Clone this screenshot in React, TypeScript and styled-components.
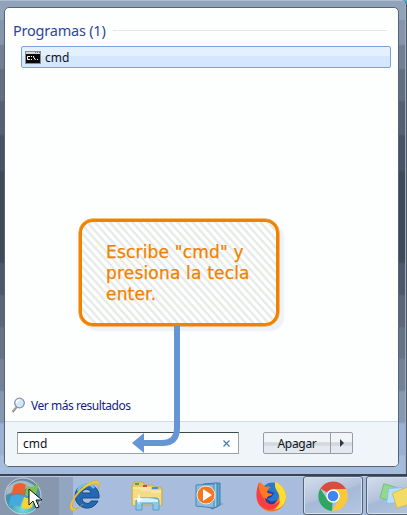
import React from 'react';
import styled, { createGlobalStyle } from 'styled-components';

const Global = createGlobalStyle`
  * { box-sizing: border-box; }
  body { margin: 0; overflow: hidden; font-family: "Noto Sans", "Open Sans", sans-serif; font-size: 12px; color: #10141c; }
`;

const Screen = styled.main`
  position: relative;
  width: 407px;
  height: 515px;
  display: flex;
  flex-direction: column;
  overflow: hidden;
  background: #35bccb;
`;

const Frame = styled.section`
  height: 474px;
  padding: 7px 8px 7px 4px;
  border-right: 1px solid #4b5666;
  border-radius: 0 5px 0 0;
  box-shadow: inset 0 1px #aebdd0, inset -1px 0 #9dadc2;
  background: linear-gradient(#91a2bb 0 20px, #8495ad 20px 44px, #728095 46px 68px, #626f81 70px 100px,
    #556173 102px 134px, #485464 136px 170px, #3f4a59 172px 262px, #4d596a 264px 294px,
    #5b6779 296px 326px, #667387 328px 358px, #748298 360px 390px, #8798b1 392px 422px, #9ab1d3 424px 455px, #a5bcdd 456px);
`;

const Panel = styled.div`
  height: 460px;
  width: 395px;
  display: flex;
  flex-direction: column;
  border: 1px solid #566477;
  border-radius: 5px;
  overflow: hidden;
  background: #fdfffe;
`;

const Results = styled.div`
  flex: 1;
  display: flex;
  flex-direction: column;
  padding: 12px 7px 6px 8px;
`;

const Heading = styled.h1`
  margin: 0;
  height: 20px;
  display: flex;
  align-items: center;
  gap: 7px;
  padding-right: 4px;
  font-size: 14.5px;
  font-weight: 400;
  letter-spacing: -0.22px;
  color: #2f4699;
  white-space: nowrap;
  &::after { content: ""; flex: 1; height: 1px; background: #e3e6ea; }
`;

const ResultItem = styled.div`
  margin: 6px 0 0 8px;
  height: 22px;
  display: flex;
  align-items: center;
  gap: 4px;
  padding-left: 3px;
  border: 1px solid #7da2d6;
  border-radius: 2px;
  background: linear-gradient(#e5f0fe 0 45%, #d4e7fe 45%);
`;

const MoreResults = styled.div`
  margin-top: auto;
  height: 20px;
  display: flex;
  align-items: center;
  gap: 5px;
  margin-left: -2px;
  color: #151c82;
  letter-spacing: -0.46px;
`;

const Footer = styled.div`
  height: 45px;
  display: flex;
  align-items: flex-start;
  padding: 10px 0 0 12px;
  gap: 24px;
  background: #f0f5fa;
  border-top: 1px solid #ccdaea;
`;

const SearchBox = styled.div`
  width: 222px;
  height: 22px;
  display: flex;
  align-items: center;
  justify-content: space-between;
  padding: 0 8px 0 5px;
  background: #fdfffe;
  border: 1px solid #9da2a5;
  border-top-color: #3c4944;
`;

const SplitButton = styled.div`
  width: 90px;
  height: 22px;
  display: flex;
  border: 1px solid #989da5;
  border-radius: 2px;
  background: linear-gradient(#f1f5f8 0 45%, #d2d8df 48% 62%, #e4e9ee 64%);
`;

const ButtonPart = styled.div<{ $main?: boolean }>`
  flex: ${p => (p.$main ? '0 0 67px' : '1')};
  display: flex;
  align-items: center;
  justify-content: center;
  letter-spacing: -0.3px;
  border-right: ${p => (p.$main ? '1px solid #989da5' : '0')};
`;

const Taskbar = styled.nav`
  height: 41px;
  display: flex;
  border-top: 2px solid #3b4352;
  background: linear-gradient(90deg, #8797ae 0 59px, #93a6c1 59px 73px, #a8bddd 73px);
  box-shadow: inset 0 1px #bccbe0;
`;

const TaskSlot = styled.div<{ $w: number; $open?: boolean }>`
  flex: 0 0 ${p => p.$w}px;
  height: 39px;
  display: flex;
  align-items: center;
  justify-content: center;
  border: ${p => (p.$open ? '1px solid #566276' : '0')};
  border-radius: 3px;
  box-shadow: ${p => (p.$open ? 'inset 0 0 0 1px #d5e0ed' : 'none')};
  background: ${p => (p.$open ? 'linear-gradient(160deg, #d4deea, #b3c3dc 45%, #a5b9d8 50%, #b5c7e1)' : 'transparent')};
  margin-right: ${p => (p.$open ? '3px' : '0')};
  overflow: hidden;
  svg { display: block; flex: none; }
`;

const Callout = styled.aside`
  position: absolute;
  left: 79px;
  top: 219px;
  width: 200px;
  height: 107px;
  padding: 20px 20px 0 24px;
  border: 3px solid #f08200;
  border-radius: 14px;
  background: repeating-linear-gradient(48deg, #fdfffe 0 2.6px, #e9ebe9 3.2px 5px, #fdfffe 5.6px);
  box-shadow: 0 0 0 0.5px #f08200, 5px 5px 2px #edf2f8;
  color: #f08200;
  font: 17px/21px "DejaVu Sans", sans-serif;
  letter-spacing: 0.18px;
  -webkit-text-stroke: 0.25px #f08200;
  white-space: nowrap;
`;

const Overlay = styled.svg<{ $x: number; $y: number }>`
  position: absolute;
  left: ${p => p.$x}px;
  top: ${p => p.$y}px;
`;

const ConsoleIcon = () => (
  <svg width="16" height="13" viewBox="0 0 16 13">
    <path fill="#8d8987" d="M0 0h16v13H0z" />
    <path fill="#d5d7d8" d="M1 1h14v2H1z" />
    <path fill="#090b0a" d="M1 3h14v9H1z" />
    <path fill="#666" d="M10 1h1v1h-1zM12 1h1v1h-1zM14 1h1v1h-1z" />
    <path stroke="#fff" fill="none" d="M5 5.5H2.5v3H5M6.5 5v1M6.5 8v1M8.5 5v1l2 3M12 8.5h1" />
  </svg>
);

const SearchIcon = () => (
  <svg width="15" height="17" viewBox="0 0 15 17">
    <path d="m5.5 10-4 5" stroke="#8c8983" strokeWidth="2.2" />
    <path d="m5 10-4 5" stroke="#d5c8ba" strokeWidth=".8" />
    <circle cx="8.5" cy="6" r="4.8" fill="#cfe8fa" stroke="#8694a8" strokeWidth="1.3" />
    <path d="M5.5 6a3 3 0 0 1 3-3" fill="none" stroke="#fff" strokeWidth="1.5" />
  </svg>
);

const StartIcon = () => (
  <svg width="42" height="38" viewBox="0 0 42 38">
    <defs>
      <radialGradient id="orb" cx=".5" cy=".85" r=".85">
        <stop offset="0" stopColor="#75e0de" /><stop offset=".5" stopColor="#3e91b0" /><stop offset="1" stopColor="#70869e" />
      </radialGradient>
    </defs>
    <circle cx="20" cy="19" r="18" fill="url(#orb)" stroke="#c0d5de" />
    <path d="M4 11Q18-4 34 11 19 10 3 18z" fill="#c6cfd3" opacity=".7" />
    <path d="M11 8q6-4 12 0l-2 10q-6-3-13 0z" fill="#ee6030" />
    <path d="M24 9q6 3 12-3l-3 11q-6 4-11 1z" fill="#79c44d" />
    <path d="M8 19q6-3 12 0l-3 11q-6-4-12 0z" fill="#45a8df" />
    <path d="M21 20q6 3 11-1l-3 11q-6 4-11 0z" fill="#f4d536" />
  </svg>
);

const IeIcon = () => (
  <svg width="34" height="34" viewBox="0 0 34 34">
    <path d="M29 22A12 12 0 1 1 30 16v3H13c0 6 8 7 9 3zM13 14h9c-1-5-8-5-9 0z" fill="#2469b5" stroke="#174a87" />
    <path d="M9 12a9 9 0 0 1 16-3" stroke="#6ec5ee" strokeWidth="2.5" fill="none" />
    <path d="M29 10C31 2 24 4 16 9 7 15 1 26 4 29c2 2 6 0 10-4-5 5-10 8-12 6C-2 27 6 14 15 7 25 0 34-1 29 10z" fill="#f5c937" stroke="#d9a62a" strokeWidth=".5" />
  </svg>
);

const FolderIcon = () => (
  <svg width="34" height="32" viewBox="0 0 34 32">
    <path d="M2 6 4 2h9l2 3h8l2 2h6l1 2v16H2z" fill="#e6c966" stroke="#c9aa51" />
    <path d="M3 7h18v3h10v15H3z" fill="#f7e8a0" />
    <path d="M3 9h8v2h10v2h10v12H3z" fill="#f5dc82" />
    <path d="M5 3h4v2H5z" fill="#42ae42" /><path d="M13 5h4v2h-4z" fill="#d84436" /><path d="M22 7h6v2h-6z" fill="#3f92d3" />
    <path d="M6 30V21q0-3 3-3h17q3 0 3 3v9h-6v-6H12v6z" fill="#8bc8e4" stroke="#559fc9" />
    <path d="M7 20q9-4 21 0v2H7z" fill="#d7f2fb" />
    <path d="m9 13 1 5 5 1-5 1-1 5-1-5-5-1 5-1z" fill="#fff" />
  </svg>
);

const MediaIcon = () => (
  <svg width="30" height="28" viewBox="0 0 30 28">
    <path d="m18 27 11-5-4-2-6 5z" fill="#7d97b6" opacity=".6" />
    <path d="M10 2 25 1v22l-8 4z" fill="#5fa4cf" stroke="#367eac" />
    <path d="M8 2 22 1v24l-7 1z" fill="#9dcae5" stroke="#367eac" />
    <path d="m1 3 18-1v24L1 24z" fill="#8cbad8" stroke="#4587b3" />
    <circle cx="11" cy="13" r="9" fill="#f47820" stroke="#e6e9e9" />
    <path d="m8 7 9 6-9 6z" fill="#fff" />
  </svg>
);

const FirefoxIcon = () => (
  <svg width="31" height="32" viewBox="0 0 32 32">
    <circle cx="17" cy="14" r="12" fill="#2779cf" />
    <path d="M3 2c3 0 5 3 6 5 2-1 5-1 6 0-3 1-5 4-3 6h4c-1 3-5 2-5 5 2 7 12 5 13-2C25 11 19 9 20 1c5 3 11 8 11 16A15 15 0 0 1 1 17C1 10 2 8 3 2z" fill="#fb7123" />
    <path d="M20 1c7 4 11 9 11 16 0 7-5 12-12 13 7-5 5-11 5-14-1-6-6-7-4-15z" fill="#ffdc34" />
    <path d="M3 2c0 6 2 15 8 20 5 5 12 2 14-1-2 8-10 11-16 8-9-4-11-14-6-27z" fill="#f8324b" opacity=".8" />
    <path d="m11 10 8 3-3 4-5 2 5 3 6-2-3 4c-5 2-10-2-10-7z" fill="#273c9f" />
    <path d="M3 2c4 2 6 6 12 5-3 2-4 4-3 6l5 1c-2 3-5 1-6 5-5-2-9-9-8-17z" fill="#ff7920" />
  </svg>
);

const ChromeIcon = () => (
  <svg width="30" height="30" viewBox="0 0 30 30">
    <path d="M15 15 2.3 7.5A15 15 0 0 1 28 8H15z" fill="#db4b3e" />
    <path d="M15 15 14 30A15 15 0 0 1 2.3 7.5L9 18z" fill="#2fa660" />
    <path d="M15 15V8h13a15 15 0 0 1-14 22l7-12z" fill="#f9c83b" />
    <circle cx="15" cy="15" r="6.7" fill="#fff" />
    <circle cx="15" cy="15" r="5.3" fill="#3f85ef" />
  </svg>
);

const NotesIcon = () => (
  <svg width="34" height="30" viewBox="0 0 36 32">
    <path d="m5 3 14 4-4 15L1 18z" fill="#93d98c" stroke="#74bd79" />
    <path d="m10 8 15-1 2 16-19 1z" fill="#b6dfff" stroke="#89bee9" />
    <path d="m14 13 20-8 6 17-21 7z" fill="#f2dc68" stroke="#d8b949" />
  </svg>
);

const FooterBar = () => (
  <Footer>
    <SearchBox>
      <span>cmd</span>
      <svg width="7" height="7" viewBox="0 0 7 7"><path d="m.5.5 6 6m0-6-6 6" stroke="#4d7eac" strokeWidth="1.3" /></svg>
    </SearchBox>
    <SplitButton>
      <ButtonPart $main>Apagar</ButtonPart>
      <ButtonPart><svg width="4" height="8" viewBox="0 0 4 8"><path d="m0 0 4 4-4 4z" fill="#303844" /></svg></ButtonPart>
    </SplitButton>
  </Footer>
);

export default function App() {
  return (
    <>
      <Global />
      <Screen>
        <Frame>
          <Panel>
            <Results>
              <Heading>Programas (1)</Heading>
              <ResultItem><ConsoleIcon /><span>cmd</span></ResultItem>
              <MoreResults><SearchIcon /><span>Ver más resultados</span></MoreResults>
            </Results>
            <FooterBar />
          </Panel>
        </Frame>
        <Taskbar>
          <TaskSlot $w={48}><StartIcon /></TaskSlot>
          <TaskSlot $w={75}><IeIcon /></TaskSlot>
          <TaskSlot $w={48}><FolderIcon /></TaskSlot>
          <TaskSlot $w={78}><MediaIcon /></TaskSlot>
          <TaskSlot $w={45}><FirefoxIcon /></TaskSlot>
          <TaskSlot $w={9} />
          <TaskSlot $w={60} $open><ChromeIcon /></TaskSlot>
          <TaskSlot $w={60} $open><NotesIcon /></TaskSlot>
        </Taskbar>
        <Callout>Escribe "cmd" y<br />presiona la tecla<br />enter.</Callout>
        <Overlay $x={130} $y={326} width="54" height="132" viewBox="0 0 54 132">
          <path d="M47 0v102q0 15-15 15H13" fill="none" stroke="#6595d5" strokeWidth="6" />
          <path d="M2 117 14 107v20z" fill="#6595d5" />
        </Overlay>
        <Overlay $x={28} $y={488} width="15" height="22" viewBox="0 0 15 22">
          <path d="M1 1v16l4-4 3 7 3-1-3-7h6z" fill="#fff" stroke="#111" />
        </Overlay>
      </Screen>
    </>
  );
}
